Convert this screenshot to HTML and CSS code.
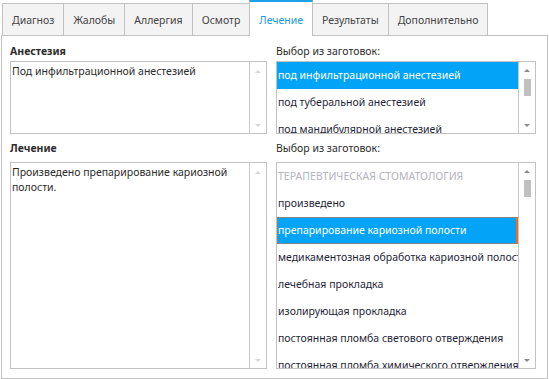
FILE: index.html
```html
<!DOCTYPE html>
<html lang="ru">
<head>
    <meta charset="UTF-8">
    <title>Лечение</title>
    <link rel="stylesheet" href="styles.css">
</head>
<body>

<div class="tabs">
    <div class="tab">Диагноз</div>
    <div class="tab">Жалобы</div>
    <div class="tab">Аллергия</div>
    <div class="tab">Осмотр</div>
    <div class="tab active">Лечение</div>
    <div class="tab">Результаты</div>
    <div class="tab">Дополнительно</div>
</div>

<div class="panel">
    <div class="label bold">Анестезия</div>
    <div class="label">Выбор из заготовок:</div>

    <div class="box memo">
        <div class="memo-text">Под инфильтрационной анестезией</div>
        <div class="vscroll faint">
            <span class="arrow up"></span>
            <span class="arrow down"></span>
        </div>
    </div>
    <div class="box list">
        <div class="items">
            <div class="item selected">под инфильтрационной анестезией</div>
            <div class="item">под туберальной анестезией</div>
            <div class="item">под мандибулярной анестезией</div>
        </div>
        <div class="vscroll">
            <span class="arrow up"></span>
            <span class="thumb"></span>
            <span class="arrow down"></span>
        </div>
    </div>

    <div class="label bold second">Лечение</div>
    <div class="label second">Выбор из заготовок:</div>

    <div class="box memo">
        <div class="memo-text">Произведено препарирование кариозной полости.</div>
        <div class="vscroll faint">
            <span class="arrow up"></span>
            <span class="arrow down"></span>
        </div>
    </div>
    <div class="box list">
        <div class="items">
            <div class="item group">ТЕРАПЕВТИЧЕСКАЯ СТОМАТОЛОГИЯ</div>
            <div class="item">произведено</div>
            <div class="item selected focused">препарирование кариозной полости</div>
            <div class="item">медикаментозная обработка кариозной полости</div>
            <div class="item">лечебная прокладка</div>
            <div class="item">изолирующая прокладка</div>
            <div class="item">постоянная пломба светового отверждения</div>
            <div class="item">постоянная пломба химического отверждения</div>
        </div>
        <div class="vscroll">
            <span class="arrow up"></span>
            <span class="thumb"></span>
            <span class="arrow down"></span>
        </div>
    </div>
</div>

</body>
</html>
```

FILE: styles.css
```css
* {
    box-sizing: border-box;
}
body {
    margin: 0;
    background: #fff;
    font-family: "Noto Sans", "Open Sans", sans-serif;
    font-size: 10.5px;
    color: #333;
}
.tabs {
    display: flex;
    align-items: flex-end;
    height: 35px;
    padding-left: 2px;
}
.tab {
    height: 32px;
    padding: 0 9px;
    margin-left: -1px;
    display: flex;
    align-items: center;
    background: #f3f3f3;
    border: 1px solid #c2c2c2;
    border-bottom: none;
    color: #444;
}
.tab:first-child {
    margin-left: 0;
}
.tab.active {
    position: relative;
    height: 36px;
    margin-bottom: -1px;
    padding-top: 1px;
    background: #fff;
    border-top: 2px solid #1ea0e8;
    color: #1a9ae0;
}
.panel {
    width: 547px;
    height: 344px;
    margin-left: 1px;
    border: 1px solid #c2c2c2;
    display: grid;
    grid-template-columns: 257px 260px;
    grid-template-rows: 25px 73px 28px 207px;
    column-gap: 9px;
    padding-left: 8px;
}
.label {
    display: flex;
    align-items: center;
    padding-top: 4px;
    color: #2b2b2b;
}
.label.second {
    padding-top: 0;
}
.label.bold {
    font-weight: bold;
}
.box {
    display: flex;
    border: 1px solid #c2c2c2;
    overflow: hidden;
    background: #fff;
}
.memo-text {
    flex: 1;
    padding: 2px 1px;
    line-height: 15px;
    color: #2b2b2b;
}
.vscroll {
    width: 17px;
    flex: none;
    border-left: 1px solid #c8c8c8;
    display: flex;
    flex-direction: column;
    align-items: center;
    padding: 8px 0 6px;
}
.list .vscroll {
    padding-top: 7px;
}
.arrow {
    width: 0;
    height: 0;
    border-left: 3px solid transparent;
    border-right: 3px solid transparent;
}
.arrow.up {
    border-bottom: 3px solid #8a8a8a;
}
.arrow.down {
    margin-top: auto;
    border-top: 3px solid #8a8a8a;
}
.vscroll.faint .arrow.up {
    border-bottom-color: #d6d6d6;
}
.vscroll.faint .arrow.down {
    border-top-color: #d6d6d6;
}
.thumb {
    width: 7px;
    height: 17px;
    margin-top: 7px;
    background: #c0c0c0;
}
.items {
    flex: 1;
    min-width: 0;
}
.item {
    height: 27px;
    line-height: 27px;
    padding-left: 1px;
    white-space: nowrap;
    overflow: hidden;
    font-size: 10.5px;
    color: #1f1f38;
}
.item.group {
    color: #b4b4bc;
}
.item.selected {
    background: #03a3f8;
    color: #fff;
}
.item.focused {
    outline: 1px dotted #f06a20;
    outline-offset: -1px;
    border-right: 2px solid #f06a20;
}
```
